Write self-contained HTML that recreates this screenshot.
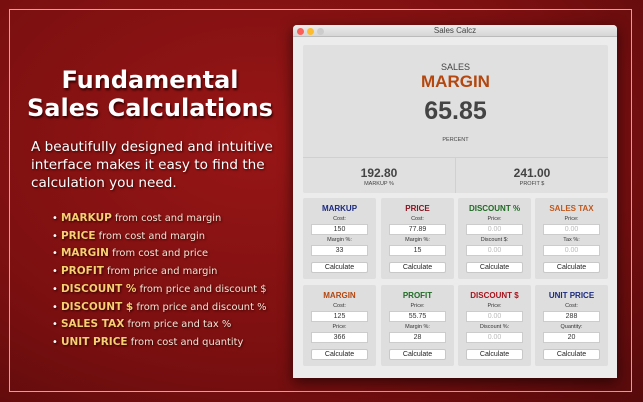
<!DOCTYPE html><html><head><style>
*{margin:0;padding:0;box-sizing:border-box}
body{width:643px;height:402px;overflow:hidden;position:relative;background:radial-gradient(ellipse at 40% 35%,#981616 0%,#7a0f10 60%,#560a0b 100%);font-family:"DejaVu Sans",Verdana,sans-serif}
.frame{position:absolute;left:9px;top:9px;width:623px;height:383px;border:1px solid #d9a29a}
.h1{position:absolute;left:0;width:300px;top:66px;text-align:center;color:#fff;font-weight:bold;font-size:24px;line-height:28px;text-shadow:1px 2px 2px #300}
.p{position:absolute;left:31px;top:138px;white-space:nowrap;color:#fff;font-size:13.6px;line-height:18px;text-shadow:1px 1px 2px #300}
.ul{position:absolute;left:52px;top:210px;font-size:9.9px;line-height:17.7px;color:#f4e4d6;text-shadow:1px 1px 2px #300}
.ul b{color:#f6cf72;font-size:10.5px}
.ul div:before{content:"• ";color:#fff}
.win{position:absolute;left:293px;top:25px;width:324px;height:353px;background:#ececec;border-radius:4px 4px 0 0;box-shadow:0 4px 14px rgba(0,0,0,.6);overflow:hidden}
.tb{height:12px;background:linear-gradient(#ececec,#d6d6d6);border-bottom:1px solid #bbb;font-family:"Liberation Sans",sans-serif;font-size:8px;color:#444;text-align:center;line-height:12px;position:relative}
.dot{position:absolute;top:2.5px;width:7px;height:7px;border-radius:50%}
.top{position:absolute;left:10px;top:20px;width:305px;height:148px;background:#e0e0e0;border-radius:2px;font-family:"Liberation Sans",sans-serif;text-align:center;color:#444}
.cards{position:absolute;left:10px;top:173px;width:305px}
.c{position:absolute;width:73px;height:81px;background:#dedede;border-radius:2px;font-family:"Liberation Sans",sans-serif;text-align:center;font-size:5.5px;color:#333}
.c h{display:block;font-weight:bold;font-size:8px;margin-top:6px;height:10px}
.c .l{margin-top:2px;height:8px}
.c .i{margin:0 auto;width:57px;height:11px;background:#fff;border:1px solid #ccc;font-size:7px;line-height:9px}
.c .g{color:#bbb}
.c .btn{margin:6px auto 0;width:57px;height:11px;background:#fff;border:1px solid #c8c8c8;border-radius:2px;font-size:7px;line-height:9px;color:#222}
</style></head><body>
<div class="frame"></div>
<div class="h1">Fundamental<br>Sales Calculations</div>
<div class="p">A beautifully designed and intuitive<br>interface makes it easy to find the<br>calculation you need.</div>
<div class="ul">
<div><b>MARKUP</b> from cost and margin</div>
<div><b>PRICE</b> from cost and margin</div>
<div><b>MARGIN</b> from cost and price</div>
<div><b>PROFIT</b> from price and margin</div>
<div><b>DISCOUNT %</b> from price and discount $</div>
<div><b>DISCOUNT $</b> from price and discount %</div>
<div><b>SALES TAX</b> from price and tax %</div>
<div><b>UNIT PRICE</b> from cost and quantity</div>
</div>
<div class="win">
<div class="tb"><span class="dot" style="left:4px;background:#fc5f57"></span><span class="dot" style="left:14px;background:#fdbc2e"></span><span class="dot" style="left:24px;background:#ccc"></span>Sales Calcz</div>
<div class="top">
<div style="position:absolute;top:17px;width:100%;font-size:9px">SALES</div>
<div style="position:absolute;top:27px;width:100%;font-size:17px;font-weight:bold;color:#b4460e">MARGIN</div>
<div style="position:absolute;top:52px;width:100%;font-size:25px;font-weight:bold;color:#444">65.85</div>
<div style="position:absolute;top:92px;width:100%;font-size:5.5px">PERCENT</div>
<div style="position:absolute;top:112px;left:0;width:100%;border-top:1px solid #d0d0d0"></div>
<div style="position:absolute;top:112px;left:152px;height:36px;border-left:1px solid #d0d0d0"></div>
<div style="position:absolute;top:121px;left:0;width:152px;font-size:12px;font-weight:bold">192.80</div>
<div style="position:absolute;top:136px;left:0;width:152px;font-size:5.5px">MARKUP %</div>
<div style="position:absolute;top:121px;left:153px;width:152px;font-size:12px;font-weight:bold">241.00</div>
<div style="position:absolute;top:136px;left:153px;width:152px;font-size:5.5px">PROFIT $</div>
</div>
<div class="cards">
<div class="c" style="left:0;top:0"><h style="color:#1c2a80">MARKUP</h><div class="l">Cost:</div><div class="i">150</div><div class="l">Margin %:</div><div class="i">33</div><div class="btn">Calculate</div></div>
<div class="c" style="left:78px;top:0"><h style="color:#8a1420">PRICE</h><div class="l">Cost:</div><div class="i">77.89</div><div class="l">Margin %:</div><div class="i">15</div><div class="btn">Calculate</div></div>
<div class="c" style="left:155px;top:0"><h style="color:#1e6a22">DISCOUNT %</h><div class="l">Price:</div><div class="i g">0.00</div><div class="l">Discount $:</div><div class="i g">0.00</div><div class="btn">Calculate</div></div>
<div class="c" style="left:232px;top:0"><h style="color:#c0581c">SALES TAX</h><div class="l">Price:</div><div class="i g">0.00</div><div class="l">Tax %:</div><div class="i g">0.00</div><div class="btn">Calculate</div></div>
<div class="c" style="left:0;top:87px"><h style="color:#b4460e">MARGIN</h><div class="l">Cost:</div><div class="i">125</div><div class="l">Price:</div><div class="i">366</div><div class="btn">Calculate</div></div>
<div class="c" style="left:78px;top:87px"><h style="color:#1e6a22">PROFIT</h><div class="l">Price:</div><div class="i">55.75</div><div class="l">Margin %:</div><div class="i">28</div><div class="btn">Calculate</div></div>
<div class="c" style="left:155px;top:87px"><h style="color:#a8141c">DISCOUNT $</h><div class="l">Price:</div><div class="i g">0.00</div><div class="l">Discount %:</div><div class="i g">0.00</div><div class="btn">Calculate</div></div>
<div class="c" style="left:232px;top:87px"><h style="color:#1c2a80">UNIT PRICE</h><div class="l">Cost:</div><div class="i">288</div><div class="l">Quantity:</div><div class="i">20</div><div class="btn">Calculate</div></div>
</div>
</div>
</body></html>
